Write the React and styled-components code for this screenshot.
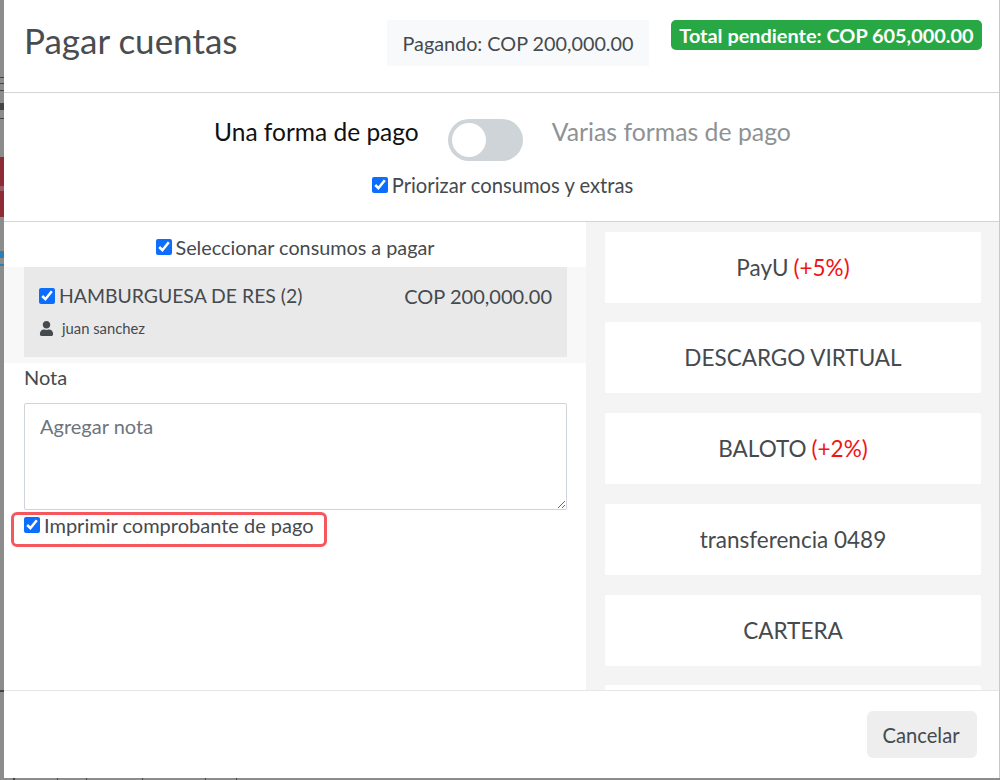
import React from "react";
import styled, { createGlobalStyle } from "styled-components";
import { FaUser } from "react-icons/fa";

const GlobalStyle = createGlobalStyle`
  html, body {
    margin: 0;
    padding: 0;
    background: #8c8c8c;
  }
  * {
    box-sizing: border-box;
  }
`;

const methods = [
  { name: "PayU", extra: "(+5%)" },
  { name: "DESCARGO VIRTUAL" },
  { name: "BALOTO", extra: "(+2%)" },
  { name: "transferencia 0489" },
  { name: "CARTERA" },
];

export default function App() {
  return (
    <>
      <GlobalStyle />
      <Page>
        <Backdrop />
        <Main>
          <Modal>
            <Header>
              <Title>Pagar cuentas</Title>
              <Paying>Pagando: COP 200,000.00</Paying>
              <TotalBadge>Total pendiente: COP 605,000.00</TotalBadge>
            </Header>
            <ModeSection>
              <ModeRow>
                <ModeLabel>Una forma de pago</ModeLabel>
                <Switch>
                  <Knob />
                </Switch>
                <ModeLabel $muted>Varias formas de pago</ModeLabel>
              </ModeRow>
              <CheckLabel $size="20.2px">
                <Check type="checkbox" defaultChecked />
                Priorizar consumos y extras
              </CheckLabel>
            </ModeSection>
            <Body>
              <LeftColumn>
                <SelectRow>
                  <CheckLabel $size="19.8px">
                    <Check type="checkbox" defaultChecked />
                    Seleccionar consumos a pagar
                  </CheckLabel>
                </SelectRow>
                <ItemBand>
                  <Item>
                    <ItemTop>
                      <CheckLabel $size="19.4px">
                        <Check type="checkbox" defaultChecked />
                        HAMBURGUESA DE RES (2)
                      </CheckLabel>
                      <span>COP 200,000.00</span>
                    </ItemTop>
                    <ItemUser>
                      <FaUser size={15} />
                      juan sanchez
                    </ItemUser>
                  </Item>
                </ItemBand>
                <NoteBlock>
                  <NoteLabel>Nota</NoteLabel>
                  <NoteInput placeholder="Agregar nota" />
                  <PrintBox>
                    <CheckLabel>
                      <Check type="checkbox" defaultChecked />
                      Imprimir comprobante de pago
                    </CheckLabel>
                  </PrintBox>
                </NoteBlock>
              </LeftColumn>
              <RightColumn>
                {methods.map((m) => (
                  <Method key={m.name}>
                    {m.name}
                    {m.extra && <Extra>{m.extra}</Extra>}
                  </Method>
                ))}
                <Method />
              </RightColumn>
            </Body>
            <Footer>
              <CancelButton>Cancelar</CancelButton>
            </Footer>
          </Modal>
          <BottomStrip />
        </Main>
      </Page>
    </>
  );
}

const Page = styled.div`
  display: flex;
  width: 1000px;
  height: 780px;
  overflow: hidden;
  font-family: "Lato", "Liberation Sans", sans-serif;
  color: #454a4e;
`;

// page behind the modal, only a sliver of it shows on the left
const Backdrop = styled.div`
  flex: none;
  width: 4px;
  background: linear-gradient(
    to bottom,
    #8c8c8c 77px,
    #444 77px 78px,
    #8c8c8c 78px 83px,
    #444 83px 84px,
    #8c8c8c 84px 90px,
    #444 90px 91px,
    #8c8c8c 91px 103px,
    #444 103px 110px,
    #8c8c8c 110px 118px,
    #444 118px 119px,
    #8c8c8c 119px 157px,
    #8e2b35 157px 186px,
    #9c5a62 186px 191px,
    #8e2b35 191px 217px,
    #8c8c8c 217px 251px,
    #2f7fb5 251px 258px,
    #8c8c8c 258px 264px,
    #2f7fb5 264px 266px,
    #8c8c8c 266px 690px,
    #444 690px 692px,
    #8c8c8c 692px
  );
`;

const Main = styled.div`
  flex: 1;
  min-width: 0;
  display: flex;
  flex-direction: column;
`;

const BottomStrip = styled.div`
  flex: none;
  height: 2px;
  background: linear-gradient(
    to right,
    #8c8c8c 9px,
    #444 9px 11px,
    #8c8c8c 11px 53px,
    #444 53px 54px,
    #8c8c8c 54px 82px,
    #444 82px 83px,
    #8c8c8c 83px 138px,
    #444 138px 139px,
    #8c8c8c 139px 201px,
    #444 201px 202px,
    #8c8c8c 202px 232px,
    #444 232px 233px,
    #8c8c8c 233px
  );
`;

const Modal = styled.div`
  flex: none;
  height: 778px;
  display: flex;
  flex-direction: column;
  background: #fff;
  border-right: 1px solid #c8c8c8;
`;

const Header = styled.header`
  flex: none;
  height: 93px;
  display: flex;
  align-items: flex-start;
  padding: 20px 17px 0 20px;
  border-bottom: 1px solid #d4d4d4;
`;

const Title = styled.h1`
  margin: -2px auto 0 0;
  font-size: 35px;
  font-weight: 400;
  line-height: 44px;
  color: #494d50;
`;

const Paying = styled.div`
  width: 262px;
  height: 46px;
  margin-right: 22px;
  display: flex;
  align-items: center;
  justify-content: center;
  font-size: 19.8px;
  background: #f8f9fa;
  color: #454a4e;
`;

const TotalBadge = styled.div`
  width: 311px;
  height: 30px;
  display: flex;
  align-items: center;
  justify-content: center;
  border-radius: 5px;
  background: #28a745;
  color: #fff;
  font-size: 19.9px;
  font-weight: 700;
`;

const ModeSection = styled.section`
  flex: none;
  height: 129px;
  display: flex;
  flex-direction: column;
  align-items: center;
  padding: 24px 0 0 2px;
  gap: 11px;
  border-bottom: 1px solid #d4d4d4;
`;

const ModeRow = styled.div`
  display: flex;
  align-items: flex-start;
  gap: 29px;
`;

const ModeLabel = styled.span`
  font-size: ${(p) => (p.$muted ? "24.8px" : "24.5px")};
  line-height: 30px;
  color: ${(p) => (p.$muted ? "#8e9295" : "#111")};
`;

const Switch = styled.div`
  width: 75px;
  height: 42px;
  margin-top: 2px;
  padding: 4px;
  border-radius: 21px;
  background: #ced4d7;
`;

const Knob = styled.div`
  width: 34px;
  height: 34px;
  border-radius: 50%;
  background: #fff;
`;

const CheckLabel = styled.label`
  display: inline-flex;
  align-items: center;
  gap: 4px;
  font-size: ${(p) => p.$size || "20px"};
  line-height: 26px;
  color: #454a4e;
`;

const Check = styled.input`
  width: 16px;
  height: 16px;
  margin: 0;
  accent-color: #0d6efd;
`;

const Body = styled.div`
  flex: 1;
  min-height: 0;
  display: flex;
  overflow: hidden;
`;

const LeftColumn = styled.div`
  flex: none;
  width: 582px;
  display: flex;
  flex-direction: column;
`;

const SelectRow = styled.div`
  height: 45px;
  display: flex;
  justify-content: center;
  padding-top: 5px;
`;

const ItemBand = styled.div`
  padding: 0 19px 6px 20px;
  background: #f8f8f8;
`;

const Item = styled.div`
  height: 90px;
  padding: 16px 15px 0;
  background: #e9e9e9;
`;

const ItemTop = styled.div`
  display: flex;
  justify-content: space-between;
  align-items: center;
  font-size: 20px;
  line-height: 26px;
`;

const ItemUser = styled.div`
  display: flex;
  align-items: center;
  gap: 8px;
  margin-top: 9px;
  font-size: 14.8px;
  line-height: 20px;
  svg {
    flex: none;
  }
`;

const NoteBlock = styled.div`
  padding: 1px 19px 0 20px;
`;

const NoteLabel = styled.div`
  font-size: 20px;
  line-height: 26px;
  margin-bottom: 13px;
`;

const NoteInput = styled.textarea`
  display: block;
  width: 100%;
  height: 107px;
  padding: 7px 15px;
  border: 1px solid #ced4da;
  border-radius: 2px;
  font-family: inherit;
  font-size: 20px;
  line-height: 30px;
  &::placeholder {
    color: #6c757d;
    opacity: 1;
  }
`;

const PrintBox = styled.div`
  width: 316px;
  height: 35px;
  margin: 2px 0 0 -13px;
  padding-left: 10px;
  display: flex;
  align-items: flex-start;
  border: 3px solid #f5575c;
  border-radius: 6px;
  label {
    line-height: 20px;
  }
`;

const RightColumn = styled.div`
  flex: 1;
  display: flex;
  flex-direction: column;
  gap: 19.75px;
  padding: 9.7px 18px 0 19px;
  background: #f5f4f5;
`;

const Method = styled.div`
  flex: none;
  height: 71px;
  display: flex;
  align-items: center;
  justify-content: center;
  gap: 5px;
  border-radius: 2px;
  background: #fff;
  font-size: 22.5px;
  color: #454a4e;
`;

const Extra = styled.span`
  color: #f01414;
`;

const Footer = styled.footer`
  flex: none;
  height: 88px;
  display: flex;
  justify-content: flex-end;
  align-items: flex-start;
  padding: 20px 22px 0 0;
  border-top: 1px solid #e5e8ea;
`;

const CancelButton = styled.button`
  width: 110px;
  height: 47px;
  padding: 0 2px 0 0;
  border: none;
  border-radius: 6px;
  background: #eeeeee;
  font-family: inherit;
  font-size: 20.2px;
  color: #454a4e;
`;
